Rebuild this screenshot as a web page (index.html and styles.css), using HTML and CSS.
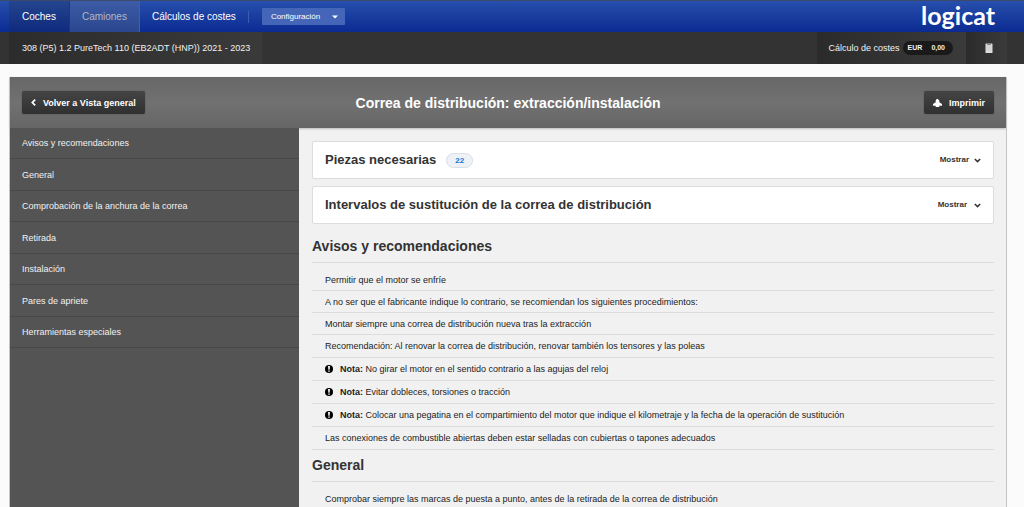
FILE: index.html
```html
<!DOCTYPE html>
<html lang="es">
<head>
<meta charset="utf-8">
<meta name="viewport" content="width=device-width, initial-scale=1">
<title>Correa de distribución: extracción/instalación</title>
<link rel="stylesheet" href="styles.css">
</head>
<body>
<header>
  <div class="topbar">
    <nav class="nav">
      <a class="nav-link active" href="#coches">Coches</a>
      <a class="nav-link muted" href="#camiones">Camiones</a>
      <a class="nav-link" href="#calculos">Cálculos de costes</a>
      <span class="nav-divider"></span>
      <button class="config" type="button">Configuración
        <svg width="6" height="4" viewBox="0 0 6 4" aria-hidden="true"><path d="M0 .5h6L3 3.500z" fill="#fff"/></svg>
      </button>
    </nav>
    <a class="logo" href="#inicio">logicat</a>
  </div>
  <div class="subbar">
    <a class="vehicle" href="#vehiculo">308 (P5) 1.2 PureTech 110 (EB2ADT (HNP)) 2021 - 2023</a>
    <a class="costs" href="#costes">Cálculo de costes <span class="pill"><span>EUR</span><span class="amount">0,00</span></span></a>
    <button class="clip" type="button" aria-label="Portapapeles">
      <svg width="8" height="10" viewBox="0 0 8 10"><rect x=".5" y=".5" width="7" height="9.500" rx=".6" fill="#dcdcdc"/><path d="M2 .5h4v1.300H2z" fill="#777"/><path d="M1.500 3h5M1.500 5h5M1.500 7h5" stroke="#c4c4c4" stroke-width=".6"/></svg>
    </button>
  </div>
</header>
<div class="panel">
  <div class="panel-head">
    <button class="btn" type="button">
      <svg width="5" height="7" viewBox="0 0 5 7" aria-hidden="true"><path d="M4.200.6 1.300 3.500l2.900 2.900" fill="none" stroke="#fff" stroke-width="1.700"/></svg>
      Volver a Vista general
    </button>
    <h1>Correa de distribución: extracción/instalación</h1>
    <button class="btn print" type="button">
      <svg width="9" height="8" viewBox="0 0 9 8" aria-hidden="true"><path d="M3.600 0h1.200l1.500 1.600v1.600L9 5v1.700H6.300V8H2.700V6.700H0V5l2.700-1.800V1.400z" fill="#fff"/></svg>
      Imprimir
    </button>
  </div>
  <div class="panel-body">
    <nav class="side">
      <a href="#avisos">Avisos y recomendaciones</a>
      <a href="#general">General</a>
      <a href="#comprobacion">Comprobación de la anchura de la correa</a>
      <a href="#retirada">Retirada</a>
      <a href="#instalacion">Instalación</a>
      <a href="#pares">Pares de apriete</a>
      <a href="#herramientas">Herramientas especiales</a>
    </nav>
    <main class="content">
      <section class="card">
        <h2>Piezas necesarias</h2><span class="count">22</span>
        <button class="toggle" type="button">Mostrar <svg width="7" height="5" viewBox="0 0 7 5" aria-hidden="true"><path d="M.8 1 3.500 3.600 6.200 1" fill="none" stroke="#333" stroke-width="1.500"/></svg></button>
      </section>
      <section class="card">
        <h2>Intervalos de sustitución de la correa de distribución</h2>
        <button class="toggle wide" type="button">Mostrar <svg width="7" height="5" viewBox="0 0 7 5" aria-hidden="true"><path d="M.8 1 3.500 3.600 6.200 1" fill="none" stroke="#333" stroke-width="1.500"/></svg></button>
      </section>
      <h2 class="title" id="avisos">Avisos y recomendaciones</h2>
      <ul class="steps">
        <li>Permitir que el motor se enfríe</li>
        <li>A no ser que el fabricante indique lo contrario, se recomiendan los siguientes procedimientos:</li>
        <li>Montar siempre una correa de distribución nueva tras la extracción</li>
        <li class="tall">Recomendación: Al renovar la correa de distribución, renovar también los tensores y las poleas</li>
        <li class="tall"><svg width="8" height="8" viewBox="0 0 8 8" aria-hidden="true"><circle cx="4" cy="4" r="4" fill="#000"/><path d="M3 1h2L4.700 4.700H3.300zM3.200 5.400h1.600v1.400H3.200z" fill="#f1f1f1"/></svg><span><strong>Nota:</strong> No girar el motor en el sentido contrario a las agujas del reloj</span></li>
        <li class="tall"><svg width="8" height="8" viewBox="0 0 8 8" aria-hidden="true"><circle cx="4" cy="4" r="4" fill="#000"/><path d="M3 1h2L4.700 4.700H3.300zM3.200 5.400h1.600v1.400H3.200z" fill="#f1f1f1"/></svg><span><strong>Nota:</strong> Evitar dobleces, torsiones o tracción</span></li>
        <li class="tall"><svg width="8" height="8" viewBox="0 0 8 8" aria-hidden="true"><circle cx="4" cy="4" r="4" fill="#000"/><path d="M3 1h2L4.700 4.700H3.300zM3.200 5.400h1.600v1.400H3.200z" fill="#f1f1f1"/></svg><span><strong>Nota:</strong> Colocar una pegatina en el compartimiento del motor que indique el kilometraje y la fecha de la operación de sustitución</span></li>
        <li class="tall">Las conexiones de combustible abiertas deben estar selladas con cubiertas o tapones adecuados</li>
      </ul>
      <h2 class="title" id="general">General</h2>
      <ul class="steps">
        <li>Comprobar siempre las marcas de puesta a punto, antes de la retirada de la correa de distribución</li>
      </ul>
    </main>
  </div>
</div>
</body>
</html>
```
FILE: styles.css
```css
* { box-sizing: border-box; }
html { overflow: hidden; }
body {
  margin: 0;
  background: #fbfbfb;
  color: #222;
  font: 9px/12px "Liberation Sans", Arial, sans-serif;
  height: 100vh;
  overflow: hidden;
}
a { color: inherit; text-decoration: none; }
button { font: inherit; color: inherit; border: 0; background: none; padding: 0; cursor: pointer; }
h1, h2, ul { margin: 0; padding: 0; }
svg { flex: none; }

.topbar {
  display: flex;
  justify-content: space-between;
  height: 32px;
  padding: 0 29px 0 9px;
  border-top: 1px solid #3b4a6b;
  background: linear-gradient(#274fac, #0b2b92);
  color: #fff;
}
.nav { display: flex; align-items: center; font-size: 10px; }
.nav-link { display: flex; align-items: center; height: 100%; padding: 0 12px; }
.nav-link.active { padding: 0 13px; background: linear-gradient(#24458f, #0f2a7c); border-right: 1px solid #1a3780; }
.nav-link.muted { background: linear-gradient(#3d5ca6, #2a468f); color: #b4b7bf; border-right: 1px solid #3f5fae; }
.nav-divider { width: 1px; height: 12px; background: #3c5cb2; }
.config {
  display: flex;
  align-items: center;
  gap: 12px;
  height: 17px;
  margin-left: 13px;
  padding: 0 7px 0 9px;
  border-radius: 1px;
  background: #4566b8;
  font-size: 8px;
}
.logo { font: 700 25px/28px Lato, sans-serif; }

.subbar {
  display: flex;
  height: 32px;
  padding: 0 17px 0 9px;
  background: #333;
  color: #f2f2f2;
}
.subbar > * { display: flex; align-items: center; height: 32px; }
.vehicle { padding: 0 12px 0 13px; background: linear-gradient(90deg, #2c2c2c, #3a3a3a); }
.costs { margin-left: auto; padding: 0 13px 0 12px; gap: 3px; background: linear-gradient(90deg, #2b2b2b, #3a3a3a); }
.pill { display: flex; gap: 9px; padding: 0 8px 0 5px; border-radius: 7px; background: #1a1a1a; font: 700 7px/14px "Liberation Sans", Arial, sans-serif; }
.clip { justify-content: center; width: 41px; padding-left: 5px; background: linear-gradient(90deg, #2b2b2b, #3a3a3a); }

.panel {
  margin: 13px 17px 0 9px;
  border: 1px solid #c4c4c4;
  border-width: 0 1px;
  background: #f1f1f1;
}
.panel-head {
  display: grid;
  grid-template-columns: 1fr auto 1fr;
  align-items: center;
  height: 51px;
  padding: 0 12px;
  background: linear-gradient(#676767, #717171 50%, #666);
  box-shadow: 0 1px 2px #bbb;
  color: #fff;
}
h1 { font-size: 14px; line-height: 18px; }
.btn {
  display: flex;
  align-items: center;
  justify-self: start;
  gap: 7px;
  height: 23px;
  padding: 0 9px;
  border-radius: 2px;
  background: linear-gradient(#454545, #303030);
  box-shadow: 0 0 1px #222;
  font-weight: 700;
}
.print { justify-self: end; }
.panel-body { display: grid; grid-template-columns: 289px minmax(0, 1fr); min-height: calc(100vh - 128px); }
.side { background: #545454; color: #f2f2f2; }
.side a {
  display: flex;
  align-items: center;
  height: 32px;
  padding: 0 12px;
  border-bottom: 1px solid #484848;
}
.side a:nth-child(odd) { height: 31px; }
.content { padding: 13px 12px 0 13px; }
.card {
  display: flex;
  align-items: center;
  height: 38px;
  margin-bottom: 7px;
  padding: 0 12px;
  border: 1px solid #ddd;
  border-radius: 2px;
  background: #fff;
}
.card h2 { color: #333; font-size: 13px; line-height: 16px; }
.count {
  margin-left: 10px;
  padding: 0 8px;
  border: 1px solid #d9dee3;
  border-radius: 8px;
  background: #eef2f6;
  color: #0a78d1;
  font: 700 8px/13px "Liberation Sans", Arial, sans-serif;
}
.toggle { display: flex; align-items: center; gap: 5px; margin-left: auto; color: #333; font-weight: 700; font-size: 8px; }
.toggle.wide { gap: 7px; }
.title { padding: 6px 0 7px; border-bottom: 1px solid #ddd; color: #333; font-size: 14px; line-height: 18px; }
.steps { list-style: none; }
.steps li { display: flex; align-items: center; height: 22px; padding-left: 13px; border-bottom: 1px solid #ddd; }
.steps li:first-child { height: 28px; padding-top: 6px; }
.steps .tall { height: 23px; gap: 7px; }
```
